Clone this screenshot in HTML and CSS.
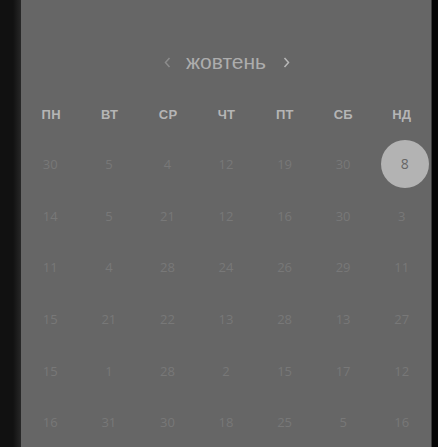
FILE: index.html
```html
<!DOCTYPE html>
<html lang="uk">
<head>
<meta charset="utf-8">
<title>Календар</title>
<link rel="stylesheet" href="styles.css">
</head>
<body>
<div class="frame">
  <div class="gutter"></div>
  <main class="panel">
    <div class="month-nav">
      <button class="chev chev-prev" aria-label="Попередній місяць">
        <svg width="7" height="11" viewBox="0 0 7 11"><path d="M5.5 1 L1.5 5.5 L5.5 10" fill="none" stroke="currentColor" stroke-width="1.5"/></svg>
      </button>
      <span class="month">жовтень</span>
      <button class="chev chev-next" aria-label="Наступний місяць">
        <svg width="7" height="11" viewBox="0 0 7 11"><path d="M1.5 1 L5.5 5.5 L1.5 10" fill="none" stroke="currentColor" stroke-width="1.5"/></svg>
      </button>
    </div>
    <div class="weekdays">
      <span>ПН</span><span>ВТ</span><span>СР</span><span>ЧТ</span><span>ПТ</span><span>СБ</span><span>НД</span>
    </div>
    <div class="days">
      <span>30</span><span>5</span><span>4</span><span>12</span><span>19</span><span>30</span><span class="selected"><b>8</b></span>
      <span>14</span><span>5</span><span>21</span><span>12</span><span>16</span><span>30</span><span>3</span>
      <span>11</span><span>4</span><span>28</span><span>24</span><span>26</span><span>29</span><span>11</span>
      <span>15</span><span>21</span><span>22</span><span>13</span><span>28</span><span>13</span><span>27</span>
      <span>15</span><span>1</span><span>28</span><span>2</span><span>15</span><span>17</span><span>12</span>
      <span>16</span><span>31</span><span>30</span><span>18</span><span>25</span><span>5</span><span>16</span>
    </div>
  </main>
  <div class="edge"></div>
</div>
</body>
</html>
```

FILE: styles.css
```css
html, body {
  margin: 0;
  padding: 0;
  height: 100%;
  overflow: hidden;
  background: #111;
}

.frame {
  display: flex;
  height: 447px;
}

.gutter {
  width: 21px;
  flex: none;
  background: linear-gradient(to right, #111 0, #111 13px, #1c1c1c 17px, #242424 20px, #2a2a2a 21px);
}

.panel {
  width: 410px;
  flex: none;
  background: #666;
  padding-top: 50px;
  box-sizing: border-box;
  font-family: "Liberation Sans", Arial, sans-serif;
}

.edge {
  flex: 1;
  background: #050505;
  border-left: 1px solid #3a3a3a;
}

.month-nav {
  display: flex;
  align-items: center;
  justify-content: center;
  height: 24px;
  padding-left: 2px;
}

.chev {
  background: none;
  border: 0;
  padding: 0;
  display: flex;
  align-items: center;
  color: #9a9a9a;
}

.chev-prev {
  color: #8c8c8c;
  margin-right: 15px;
}

.chev-next {
  color: #b8b8b8;
  margin-left: 17px;
}

.month {
  font-size: 21px;
  color: #adadad;
  line-height: 24px;
}

.weekdays {
  display: grid;
  grid-template-columns: repeat(7, 1fr);
  margin-top: 30px;
  height: 20px;
  margin-bottom: 14px;
  align-items: center;
  padding-left: 1px;
}

.weekdays span {
  text-align: center;
  font-weight: bold;
  font-size: 13px;
  color: #b5b5b5;
  letter-spacing: 0.3px;
}

.days {
  display: grid;
  grid-template-columns: repeat(7, 1fr);
  grid-auto-rows: 51.7px;
}

.days span {
  display: flex;
  align-items: center;
  justify-content: center;
  font-family: "Open Sans", "Liberation Sans", sans-serif;
  font-size: 13px;
  color: #787878;
}

.days .selected b {
  display: flex;
  align-items: center;
  justify-content: center;
  width: 48px;
  height: 48px;
  margin-left: 6px;
  border-radius: 50%;
  background: #b3b3b3;
  color: #666;
  font-weight: normal;
  font-size: 14px;
}
```
